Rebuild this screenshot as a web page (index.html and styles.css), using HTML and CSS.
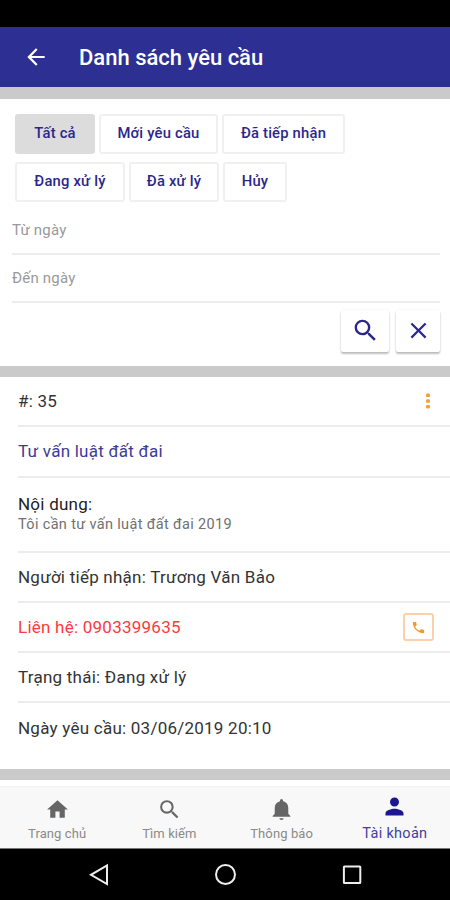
FILE: index.html
```html
<!DOCTYPE html>
<html lang="vi">
<head>
  <meta charset="UTF-8" />
  <meta name="viewport" content="width=device-width, initial-scale=1.0" />
  <title>Danh sách yêu cầu</title>
  <link rel="stylesheet" href="styles.css">
</head>
<body>
  <div class="status-bar"></div>
  <header class="toolbar">
    <svg class="back" viewBox="0 0 24 24"><path d="M20 11H7.83l5.59-5.59L12 4l-8 8 8 8 1.41-1.41L7.83 13H20z"/></svg>
    <h1>Danh sách yêu cầu</h1>
  </header>

  <main>
    <section class="filter">
      <div class="chips">
        <button class="chip chip-all active">Tất cả</button>
        <button class="chip chip-new">Mới yêu cầu</button>
        <button class="chip chip-received">Đã tiếp nhận</button>
      </div>
      <div class="chips">
        <button class="chip chip-doing">Đang xử lý</button>
        <button class="chip chip-done">Đã xử lý</button>
        <button class="chip chip-cancel">Hủy</button>
      </div>
      <div class="field">Từ ngày</div>
      <div class="field">Đến ngày</div>
      <div class="actions">
        <button class="action search">
          <svg viewBox="0 0 24 24"><path d="M15.5 14h-.79l-.28-.27A6.471 6.471 0 0 0 16 9.5 6.5 6.5 0 1 0 9.5 16c1.61 0 3.09-.59 4.23-1.57l.27.28v.79l5 4.99L20.49 19l-4.99-5zm-6 0C7.01 14 5 11.99 5 9.5S7.01 5 9.5 5 14 7.01 14 9.5 11.99 14 9.5 14z"/></svg>
        </button>
        <button class="action clear">
          <svg viewBox="0 0 24 24"><path d="M19 6.41L17.59 5 12 10.59 6.41 5 5 6.41 10.59 12 5 17.59 6.41 19 12 13.41 17.59 19 19 17.59 13.41 12z"/></svg>
        </button>
      </div>
    </section>

    <section class="request">
      <div class="row">
        <span>#: 35</span>
        <svg class="more" viewBox="0 0 6 18"><rect x="1" y="1.5" width="4" height="3.6" rx="1.2"/><rect x="1" y="7.2" width="4" height="3.6" rx="1.2"/><rect x="1" y="12.9" width="4" height="3.6" rx="1.2"/></svg>
      </div>
      <div class="row subject"><span>Tư vấn luật đất đai</span></div>
      <div class="row content">
        <span>Nội dung:</span>
        <small>Tôi cần tư vấn luật đất đai 2019</small>
      </div>
      <div class="row"><span>Người tiếp nhận: Trương Văn Bảo</span></div>
      <div class="row contact">
        <span>Liên hệ: 0903399635</span>
        <button class="call">
          <svg viewBox="0 0 24 24"><path d="M6.62 10.79c1.44 2.83 3.76 5.14 6.59 6.59l2.2-2.2c.27-.27.67-.36 1.02-.24 1.12.37 2.33.57 3.57.57.55 0 1 .45 1 1V20c0 .55-.45 1-1 1-9.39 0-17-7.61-17-17 0-.55.45-1 1-1h3.5c.55 0 1 .45 1 1 0 1.25.2 2.45.57 3.57.11.35.03.74-.25 1.02z"/></svg>
        </button>
      </div>
      <div class="row"><span>Trạng thái: Đang xử lý</span></div>
      <div class="row"><span>Ngày yêu cầu: 03/06/2019 20:10</span></div>
    </section>
  </main>

  <nav class="tabs">
    <a class="tab">
      <svg viewBox="0 0 24 24"><path d="M10 20v-6h4v6h5v-8h3L12 3 2 12h3v8z"/></svg>
      <span>Trang chủ</span>
    </a>
    <a class="tab">
      <svg viewBox="0 0 24 24"><path d="M15.5 14h-.79l-.28-.27A6.471 6.471 0 0 0 16 9.5 6.5 6.5 0 1 0 9.5 16c1.61 0 3.09-.59 4.23-1.57l.27.28v.79l5 4.99L20.49 19l-4.99-5zm-6 0C7.01 14 5 11.99 5 9.5S7.01 5 9.5 5 14 7.01 14 9.5 11.99 14 9.5 14z"/></svg>
      <span>Tìm kiếm</span>
    </a>
    <a class="tab">
      <svg viewBox="0 0 24 24"><path d="M12 22c1.1 0 2-.7 2-1.6h-4c0 .9.9 1.6 2 1.6zm6.5-6v-5.5c0-3.07-1.9-5.64-5-6.32V3.5a1.5 1.5 0 0 0-3 0v.68c-3.1.68-5 3.25-5 6.32V16l-2 2.2v.8h17v-.8z"/></svg>
      <span>Thông báo</span>
    </a>
    <a class="tab active">
      <svg viewBox="0 0 24 24"><path d="M12 12c2.21 0 4-1.79 4-4s-1.79-4-4-4-4 1.79-4 4 1.79 4 4 4zm0 2c-2.67 0-8 1.34-8 4v2h16v-2c0-2.66-5.33-4-8-4z"/></svg>
      <span>Tài khoản</span>
    </a>
  </nav>

  <footer class="system-nav">
    <svg viewBox="0 0 24 24"><path d="M21 2.5v18.6L5 11.8z"/></svg>
    <svg viewBox="0 0 24 24"><circle cx="12.5" cy="11.5" r="9.5"/></svg>
    <svg viewBox="0 0 24 24"><rect x="3.9" y="3.5" width="16.4" height="16.4" rx="0.5"/></svg>
  </footer>
</body>
</html>
```
FILE: styles.css
```css
:root {
  --primary: #2d3092;
  --navy: #2b278c;
  --orange: #f6a036;
  --band: #cacaca;
  --line: #ececec;
}

* {
  box-sizing: border-box;
}

body {
  margin: 0;
  height: 900px;
  display: flex;
  flex-direction: column;
  overflow: hidden;
  font-family: Roboto, "Noto Sans", sans-serif;
  background: #fff;
}

button {
  font-family: inherit;
  padding: 0;
  background: #fff;
}

svg {
  display: block;
  fill: currentColor;
}

.status-bar {
  height: 27px;
  background: #000;
}

.toolbar {
  height: 60px;
  display: flex;
  align-items: center;
  padding-left: 23px;
  gap: 30px;
  background: var(--primary);
  color: #fff;
}

.back {
  width: 26px;
  height: 26px;
}

h1 {
  margin: 0;
  font-size: 22px;
  font-weight: 500;
}

main {
  flex: 1;
}

.filter {
  height: 290px;
  padding: 15px 10px 0 12px;
  border-top: 12px solid var(--band);
  border-bottom: 11px solid var(--band);
}

.chips {
  display: flex;
  gap: 4px;
  height: 40px;
  margin: 0 0 8px 3px;
}

.chip {
  padding-bottom: 2px;
  border: 2px solid #f0f0f0;
  border-radius: 3px;
  color: var(--navy);
  font-size: 14.8px;
  font-weight: 500;
  letter-spacing: 0.2px;
  white-space: nowrap;
}

.chip.active {
  background: #dcdcdc;
  border-color: #dcdcdc;
}

.chip-all { width: 80px; }
.chip-new { width: 119px; }
.chip-received { width: 123px; }
.chip-doing { width: 110px; }
.chip-done { width: 90px; }
.chip-cancel { width: 64px; }

.field {
  height: 48px;
  padding-top: 13px;
  border-bottom: 2px solid var(--line);
  font-size: 15px;
  letter-spacing: 0.2px;
  line-height: 20px;
  color: #999;
}

.chips + .field {
  margin-top: -3px;
}

.actions {
  display: flex;
  justify-content: flex-end;
  gap: 7px;
  padding-top: 7px;
}

.action {
  display: flex;
  align-items: center;
  justify-content: center;
  height: 42px;
  padding-bottom: 2px;
  border: 0;
  border-radius: 2px;
  color: var(--navy);
  box-shadow: 0 2px 2px rgba(0, 0, 0, 0.25), 0 0 2px rgba(0, 0, 0, 0.08);
}

.action svg {
  width: 29px;
  height: 29px;
}

.search {
  width: 48px;
}

.clear {
  width: 44px;
}

.clear svg {
  width: 27px;
  height: 27px;
}

.request {
  padding-left: 18px;
  height: 403px;
  border-bottom: 11px solid var(--band);
}

.row {
  height: 50.3px;
  display: flex;
  align-items: center;
  justify-content: space-between;
  padding-right: 16px;
  border-bottom: 2px solid var(--line);
  font-size: 17px;
  letter-spacing: 0.24px;
  color: #333;
}

.row:last-child {
  border-bottom-color: transparent;
}

.row.subject {
  color: #3d3b98;
}

.row.content {
  height: 75px;
  flex-direction: column;
  align-items: flex-start;
  justify-content: center;
}

.content span {
  line-height: 21px;
  color: #222;
}

.content small {
  font-size: 14.5px;
  letter-spacing: 0.34px;
  line-height: 19px;
  color: #707070;
}

.row.contact {
  color: #fb3b3b;
}

.more {
  width: 6px;
  height: 18px;
  margin-right: 3px;
  color: var(--orange);
}

.call {
  width: 31px;
  height: 28px;
  display: flex;
  align-items: center;
  justify-content: center;
  border: 2px solid #fbd0ac;
  border-radius: 3px;
  color: #f39a25;
}

.call svg {
  width: 15px;
  height: 15px;
}

.tabs {
  height: 63px;
  display: grid;
  grid-template-columns: repeat(4, 1fr);
  padding-left: 1px;
  background: #f8f8f8;
  border-top: 1px solid #f2f2f2;
  border-bottom: 1px solid #777;
}

.tab {
  display: flex;
  flex-direction: column;
  align-items: center;
  padding-top: 10px;
  font-size: 13px;
  letter-spacing: 0.1px;
  line-height: 16px;
  color: #8a8a8a;
}

.tab svg {
  width: 25px;
  height: 25px;
  margin-bottom: 4px;
  color: #666;
}

.tab.active {
  padding: 6px 0 0 2px;
  font-size: 14.5px;
  letter-spacing: 0.3px;
  color: #4340a0;
}

.tab.active svg {
  width: 27px;
  height: 27px;
  margin-bottom: 6px;
  color: #1c1791;
}

.system-nav {
  height: 51px;
  display: flex;
  align-items: center;
  justify-content: space-between;
  padding: 0 86px;
  background: #000;
}

.system-nav svg {
  width: 24px;
  height: 24px;
  fill: none;
  stroke: #eee;
  stroke-width: 2;
}
```
